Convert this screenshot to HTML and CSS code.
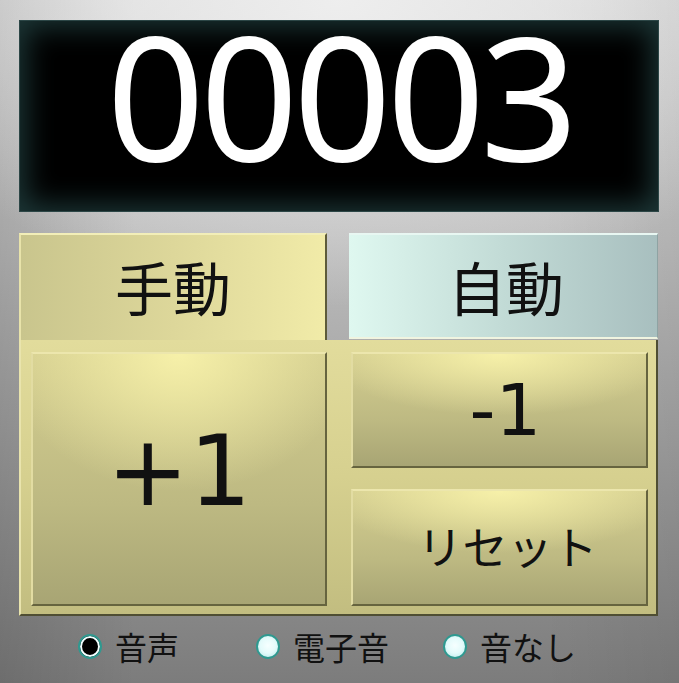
FILE: index.html
```html
<!DOCTYPE html>
<html lang="ja">
<head>
<meta charset="utf-8">
<title>カウンター</title>
<link rel="stylesheet" href="styles.css">
</head>
<body>
<div class="app">
  <div class="display"><span class="digits">00003</span></div>
  <div class="tabs">
    <div class="tab tab-manual">手動</div>
    <div class="tab tab-auto">自動</div>
  </div>
  <div class="panel">
    <div class="btn btn-plus">+1</div>
    <div class="btn btn-minus">-1</div>
    <div class="btn btn-reset">リセット</div>
  </div>
  <div class="radios">
    <div class="radio"><span class="dot dot-on"></span><span class="rlabel">音声</span></div>
    <div class="radio"><span class="dot"></span><span class="rlabel">電子音</span></div>
    <div class="radio"><span class="dot"></span><span class="rlabel">音なし</span></div>
  </div>
</div>
</body>
</html>
```

FILE: styles.css
```css
html, body {
  margin: 0;
  padding: 0;
}
body {
  width: 679px;
  height: 683px;
  overflow: hidden;
  font-family: "Noto Sans CJK JP", "Noto Sans", sans-serif;
  background:
    radial-gradient(ellipse 70% 45% at 50% 0%, rgba(240,240,240,0.9), rgba(240,240,240,0) 100%),
    linear-gradient(to right, rgba(0,0,0,0.12) 0%, rgba(0,0,0,0) 20%, rgba(0,0,0,0) 80%, rgba(0,0,0,0.06) 100%),
    linear-gradient(to bottom, #d9d9d9 0%, #bdbdbd 35%, #9a9a9a 70%, #7c7c7c 100%);
}
.app {
  padding: 20px 20px 0 19px;
  display: flex;
  flex-direction: column;
}
.display {
  box-sizing: border-box;
  width: 640px;
  height: 192px;
  padding-top: 3px;
  background: #000;
  border: 1px solid #2c4646;
  box-shadow: inset 0 0 28px 6px #1d3838;
  color: #fff;
  text-align: center;
}
.digits {
  display: block;
  font-family: "Noto Sans", "Open Sans", sans-serif;
  font-size: 172px;
  line-height: 140px;
  letter-spacing: -5px;
  padding-left: 2px;
}
.tabs {
  display: flex;
  gap: 22px;
  margin-top: 21px;
  height: 107px;
}
.tab {
  box-sizing: border-box;
  display: flex;
  align-items: center;
  justify-content: center;
  font-size: 58px;
  color: #111;
}
.tab-manual {
  width: 308px;
  padding-bottom: 4px;
  background: linear-gradient(to right, #c9c58d 0%, #ddd79a 50%, #f1eba8 100%);
  border-top: 2px solid #f2eeb8;
  border-left: 2px solid #e8e3aa;
  border-right: 2px solid #5d5b3a;
}
.tab-auto {
  width: 309px;
  height: 106px;
  background: linear-gradient(to right, #dff8f0 0%, #c2dbd6 50%, #a8bfbf 100%);
  border-top: 2px solid #e8f7f2;
  border-bottom: 2px solid #f0f4e0;
  border-right: 1px solid #8fa3a3;
  padding-left: 6px;
}
.panel {
  box-sizing: border-box;
  width: 639px;
  height: 276px;
  padding: 12px 8px 8px 10px;
  display: grid;
  grid-template-columns: 296px 297px;
  grid-template-rows: 116px 117px;
  column-gap: 24px;
  row-gap: 21px;
  background: linear-gradient(to bottom, #e2dc9c 0%, #d6d08f 50%, #c2bd80 100%);
  border-left: 2px solid #e9e4ad;
  border-right: 2px solid #4f4e33;
  border-bottom: 2px solid #4f4e33;
}
.btn {
  box-sizing: border-box;
  display: flex;
  align-items: center;
  justify-content: center;
  color: #111;
  background:
    radial-gradient(ellipse 60% 55% at 50% 0%, rgba(248,242,170,0.95), rgba(248,242,170,0) 100%),
    linear-gradient(to bottom, #d4ce90 0%, #bdb982 60%, #a8a574 100%);
  border-top: 2px solid #ece6ad;
  border-left: 2px solid #e2dca2;
  border-right: 2px solid #66643f;
  border-bottom: 2px solid #66643f;
}
.btn-plus {
  grid-row: 1 / span 2;
  font-family: "DejaVu Sans", sans-serif;
  font-size: 98px;
  padding-bottom: 16px;
}
.btn-minus {
  font-family: "DejaVu Sans", sans-serif;
  font-size: 72px;
  padding-left: 12px;
}
.btn-reset {
  font-size: 45px;
  padding-left: 16px;
  padding-bottom: 4px;
}
.radios {
  display: grid;
  grid-template-columns: 178px 187px auto;
  padding-left: 59px;
  margin-top: 14px;
  height: 26px;
  align-items: center;
}
.radio {
  display: flex;
  align-items: center;
  gap: 13px;
}
.dot {
  box-sizing: border-box;
  flex: none;
  width: 24px;
  height: 25px;
  border-radius: 50%;
  border: 2px solid #2f9990;
  background: radial-gradient(circle at 50% 45%, #f6ffff 0%, #e4fbfb 50%, #b4e9e9 100%);
}
.dot-on {
  background: #000;
  box-shadow: inset 0 0 0 2px #f2ffff;
}
.rlabel {
  font-size: 32px;
  line-height: 32px;
  color: #111;
}
```
